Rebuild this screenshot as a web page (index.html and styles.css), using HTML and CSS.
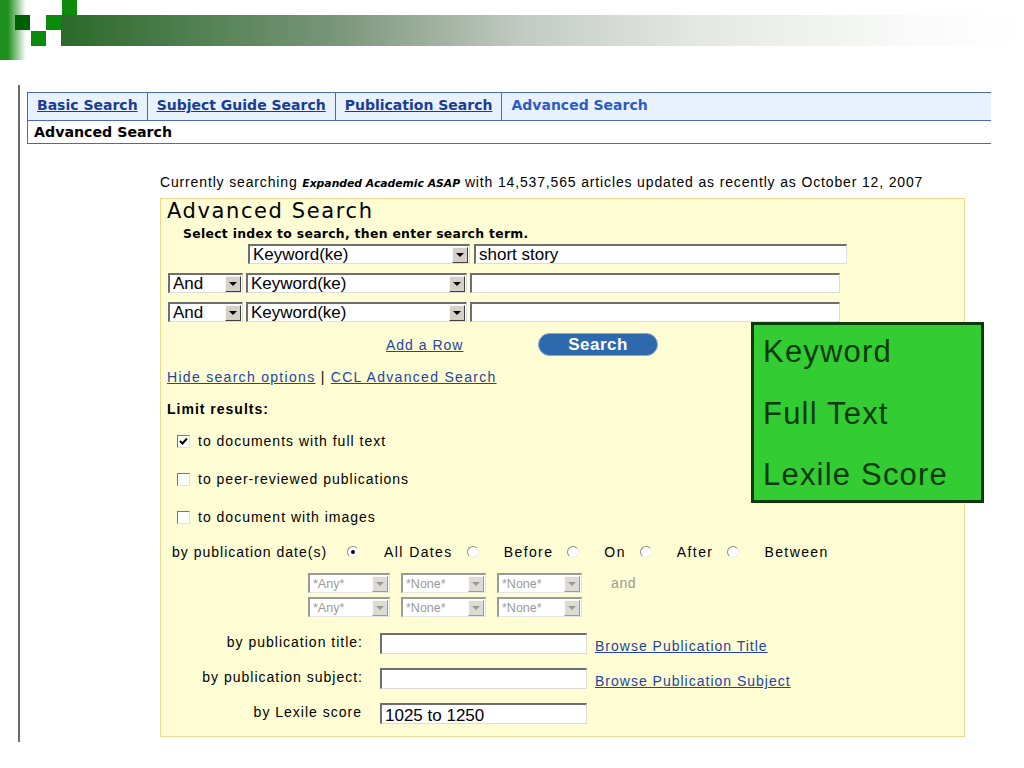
FILE: index.html
```html
<!DOCTYPE HTML><html>
<head>
  <title>Advanced Search</title>
  <meta name="viewport" content="width=device-width, initial-scale=1">
  <link rel="stylesheet" href="styles.css">
</head>
<body>
  <div class="banner">
    <svg width="1024" height="60" viewBox="0 0 1024 60">
      <defs>
        <linearGradient id="edge" x1="0" y1="0" x2="1" y2="0">
          <stop offset="0" stop-color="#1f8f1f"/>
          <stop offset="0.3" stop-color="#1f8f1f"/>
          <stop offset="1" stop-color="#ffffff"/>
        </linearGradient>
        <linearGradient id="bar" x1="0" y1="0" x2="1" y2="0">
          <stop offset="0" stop-color="#2b6a2b"/>
          <stop offset="0.29" stop-color="#7a977a"/>
          <stop offset="0.48" stop-color="#c3cac3"/>
          <stop offset="0.66" stop-color="#e4e8e4"/>
          <stop offset="0.88" stop-color="#f9faf9"/>
          <stop offset="1" stop-color="#ffffff"/>
        </linearGradient>
      </defs>
      <rect x="0" y="0" width="26" height="60" fill="url(#edge)"/>
      <rect x="61" y="15" width="963" height="31" fill="url(#bar)"/>
      <rect x="15" y="15" width="15" height="15" fill="#005f00"/>
      <rect x="46" y="15" width="15" height="15" fill="#0b8a0b"/>
      <rect x="31" y="31" width="15" height="15" fill="#0b8a0b"/>
      <rect x="62" y="0" width="15" height="15" fill="#0b8a0b"/>
    </svg>
  </div>

  <div class="page">
    <div class="tabs">
      <div class="tabrow">
        <a class="tab" href="#">Basic Search</a>
        <a class="tab" href="#">Subject Guide Search</a>
        <a class="tab" href="#">Publication Search</a>
        <span class="tab current">Advanced Search</span>
      </div>
      <div class="subrow">Advanced Search</div>
    </div>

    <p class="status">Currently searching <b>Expanded Academic ASAP</b> with 14,537,565 articles updated as recently as October 12, 2007</p>

    <div class="panel">
      <h2>Advanced Search</h2>
      <div class="hint">Select index to search, then enter search term.</div>

      <div class="row first">
        <div class="sel index"><span class="val">Keyword(ke)</span><span class="btn"><i></i></span></div>
        <div class="field term1">short story</div>
      </div>
      <div class="row">
        <div class="sel op"><span class="val">And</span><span class="btn"><i></i></span></div>
        <div class="sel index2"><span class="val">Keyword(ke)</span><span class="btn"><i></i></span></div>
        <div class="field term"></div>
      </div>
      <div class="row">
        <div class="sel op"><span class="val">And</span><span class="btn"><i></i></span></div>
        <div class="sel index2"><span class="val">Keyword(ke)</span><span class="btn"><i></i></span></div>
        <div class="field term"></div>
      </div>

      <div class="actions">
        <span class="addrow"><a href="#">Add a Row</a></span>
        <span class="search">Search</span>
      </div>

      <div class="options"><a href="#">Hide search options</a> | <a href="#">CCL Advanced Search</a></div>

      <div class="limit">Limit results:</div>
      <div class="checks">
        <div class="check"><span class="box"><svg width="11" height="11" viewBox="0 0 11 11"><polyline points="2,5 4.5,7.5 9,2.5" fill="none" stroke="#000" stroke-width="2"/></svg></span>to documents with full text</div>
        <div class="check"><span class="box"></span>to peer-reviewed publications</div>
        <div class="check"><span class="box"></span>to document with images</div>
      </div>

      <div class="dates">
        <span class="dlabel">by publication date(s)</span>
        <span class="radio on"></span><span class="rlabel">All Dates</span>
        <span class="radio"></span><span class="rlabel">Before</span>
        <span class="radio"></span><span class="rlabel">On</span>
        <span class="radio"></span><span class="rlabel">After</span>
        <span class="radio"></span><span class="rlabel">Between</span>
      </div>
      <div class="daterow">
        <div class="dsel any"><span class="val">*Any*</span><span class="btn"><i></i></span></div>
        <div class="dsel"><span class="val">*None*</span><span class="btn"><i></i></span></div>
        <div class="dsel"><span class="val">*None*</span><span class="btn"><i></i></span></div>
        <span class="and">and</span>
      </div>
      <div class="daterow second">
        <div class="dsel any"><span class="val">*Any*</span><span class="btn"><i></i></span></div>
        <div class="dsel"><span class="val">*None*</span><span class="btn"><i></i></span></div>
        <div class="dsel"><span class="val">*None*</span><span class="btn"><i></i></span></div>
      </div>

      <div class="lrow">
        <span class="llabel">by publication title:</span>
        <div class="field small"></div>
        <a href="#">Browse Publication Title</a>
      </div>
      <div class="lrow">
        <span class="llabel">by publication subject:</span>
        <div class="field small"></div>
        <a href="#">Browse Publication Subject</a>
      </div>
      <div class="lrow">
        <span class="llabel lexile">by Lexile score</span>
        <div class="field small">1025 to 1250</div>
      </div>
    </div>
  </div>

  <div class="callout">
    <div class="line">Keyword</div>
    <div class="line">Full Text</div>
    <div class="line">Lexile Score</div>
  </div>
</body>
</html>
```

FILE: styles.css
```css
html {
  font-family: "Liberation Sans", Arial, sans-serif;
}
body {
  margin: 0;
  background-color: #fff;
  color: #000;
}
.banner {
  height: 60px;
}
.banner svg {
  display: block;
}
.page {
  margin: 25px 0 0 18px;
  padding-top: 7px;
  height: 650px;
  border-left: 2px solid #6b6b6b;
}

/* tabs */
.tabs {
  margin-left: 7px;
  width: 963px;
  border-left: 1px solid #4a68c0;
  font-family: "DejaVu Sans", Verdana, sans-serif;
  font-weight: bold;
}
.tabrow {
  display: flex;
  height: 27px;
  background-color: #e7f2fc;
  border-top: 1px solid #4a68c0;
  border-bottom: 1px solid #4a68c0;
}
.tab {
  display: flex;
  align-items: center;
  padding: 0 9px 3px 9px;
  font-size: 14px;
  color: #1b3c95;
  border-right: 1px solid #4a68c0;
}
.tab.current {
  color: #2f5cc2;
  border-right: none;
}
.subrow {
  height: 22px;
  line-height: 22px;
  padding-left: 6px;
  font-size: 14.2px;
  border-bottom: 1px solid #4a68c0;
}

.status {
  margin: 30px 0 0 140px;
  font-size: 14px;
  line-height: 16px;
  letter-spacing: 0.85px;
}
.status b {
  font-family: "DejaVu Sans", Verdana, sans-serif;
  font-style: italic;
  font-size: 10.8px;
  letter-spacing: 0;
}

/* search panel */
.panel {
  box-sizing: border-box;
  margin: 6px 0 0 140px;
  width: 805px;
  height: 539px;
  padding: 1px 0 0 6px;
  background-color: #fefdd3;
  border: 1px solid #efd88c;
  font-size: 14px;
  letter-spacing: 1px;
}
.panel a {
  color: #2444a4;
}
h2 {
  margin: 0;
  font-family: "DejaVu Sans", Verdana, sans-serif;
  font-weight: normal;
  font-size: 21px;
  line-height: 22px;
  letter-spacing: 1.6px;
}
.hint {
  margin: 5px 0 0 16px;
  font-family: "DejaVu Sans", Verdana, sans-serif;
  font-weight: bold;
  font-size: 12.4px;
  line-height: 14px;
  letter-spacing: 0.3px;
}
.row {
  display: flex;
  gap: 3px;
  height: 20px;
  margin: 9px 0 0 1px;
  letter-spacing: 0;
}
.row.first {
  margin: 3px 0 0 81px;
  gap: 4px;
}
.sel, .field, .dsel {
  box-sizing: border-box;
  display: flex;
  align-items: center;
  background-color: #fff;
  border-style: solid;
  border-width: 2px 1px 1px 2px;
  border-color: #6e6e6e #dcdcdc #dcdcdc #6e6e6e;
}
.sel {
  height: 20px;
  font-size: 17px;
}
.sel .val, .dsel .val {
  flex: 1;
  padding-left: 3px;
  line-height: 16px;
}
.btn {
  box-sizing: border-box;
  display: flex;
  align-items: center;
  justify-content: center;
  width: 16px;
  height: 16px;
  margin-right: 1px;
  background-color: #d4d0c8;
  border: 1px solid;
  border-color: #f6f6f6 #404040 #404040 #f6f6f6;
}
.btn i {
  width: 0;
  height: 0;
  border-left: 4px solid transparent;
  border-right: 4px solid transparent;
  border-top: 4px solid #000;
}
.index { width: 222px; }
.op { width: 75px; }
.index2 { width: 221px; }
.field {
  height: 20px;
  padding-left: 3px;
  font-size: 17px;
  line-height: 16px;
}
.term1 { width: 373px; }
.term { width: 370px; }

.actions {
  display: flex;
  align-items: center;
  height: 23px;
  margin: 11px 0 0 219px;
}
.addrow {
  width: 152px;
  font-size: 14px;
  letter-spacing: 1px;
}
.search {
  box-sizing: border-box;
  width: 120px;
  height: 23px;
  border-radius: 12px;
  background-color: #2f69ad;
  border: 1px solid #86a8d2;
  color: #fff;
  font-weight: bold;
  font-size: 17px;
  line-height: 21px;
  text-align: center;
  letter-spacing: 0.5px;
}
.options {
  margin-top: 13px;
  line-height: 16px;
  letter-spacing: 1.3px;
}
.limit {
  margin-top: 16px;
  line-height: 16px;
  font-weight: bold;
  letter-spacing: 1px;
}
.checks {
  margin-top: 5px;
}
.check {
  display: flex;
  align-items: center;
  height: 38px;
  padding-left: 10px;
}
.box {
  box-sizing: border-box;
  display: flex;
  align-items: center;
  justify-content: center;
  width: 13px;
  height: 13px;
  margin-right: 8px;
  background-color: #fff;
  border: 1px solid;
  border-color: #777 #e2e2e2 #e2e2e2 #777;
}
.dates {
  display: flex;
  align-items: center;
  height: 16px;
  margin: 8px 0 0 5px;
  letter-spacing: 1px;
}
.radio {
  box-sizing: border-box;
  display: flex;
  align-items: center;
  justify-content: center;
  width: 12px;
  height: 12px;
  margin-left: 14px;
  border-radius: 50%;
  background-color: #fff;
  border: 1px solid;
  border-color: #8c8c8c #ececec #ececec #8c8c8c;
}
.dlabel + .radio {
  margin-left: 20px;
}
.radio.on::after {
  content: "";
  width: 4px;
  height: 4px;
  border-radius: 50%;
  background-color: #000;
}
.rlabel {
  margin-left: 25px;
  letter-spacing: 1.4px;
}
.daterow {
  display: flex;
  align-items: center;
  gap: 11px;
  height: 20px;
  margin: 13px 0 0 141px;
  letter-spacing: 0;
}
.daterow.second {
  margin-top: 4px;
}
.dsel {
  width: 85px;
  height: 20px;
  color: #9a9a9a;
  font-size: 12.5px;
  border-color: #9a9a9a #e4e4e4 #e4e4e4 #9a9a9a;
}
.dsel.any {
  width: 82px;
}
.dsel .btn {
  background-color: #dedbd5;
  border-color: #f8f8f8 #9a9a9a #9a9a9a #f8f8f8;
}
.dsel .btn i {
  border-top-color: #9a9a9a;
}
.and {
  margin-left: 18px;
  color: #9a9a9a;
  font-size: 14px;
  letter-spacing: 0.6px;
}
.lrow {
  display: flex;
  align-items: center;
  height: 21px;
  margin-top: 14px;
}
.daterow.second + .lrow {
  margin-top: 16px;
}
.llabel {
  width: 196px;
  text-align: right;
  margin-top: -4px;
}
.llabel.lexile {
  width: 195px;
  margin-right: 1px;
}
.field.small {
  width: 207px;
  height: 21px;
  margin: 0 8px 0 17px;
  padding-top: 3px;
  letter-spacing: 0;
}
.lrow a {
  margin-top: 5px;
}

/* green note over the page */
.callout {
  position: absolute;
  left: 751px;
  top: 322px;
  box-sizing: border-box;
  width: 233px;
  height: 181px;
  padding-left: 9px;
  background-color: #33cc33;
  border: 3px solid #0b3a0b;
  color: #093a09;
  font-size: 31px;
  letter-spacing: 1.2px;
}
.callout .line {
  height: 61.5px;
  line-height: 54px;
}
```
